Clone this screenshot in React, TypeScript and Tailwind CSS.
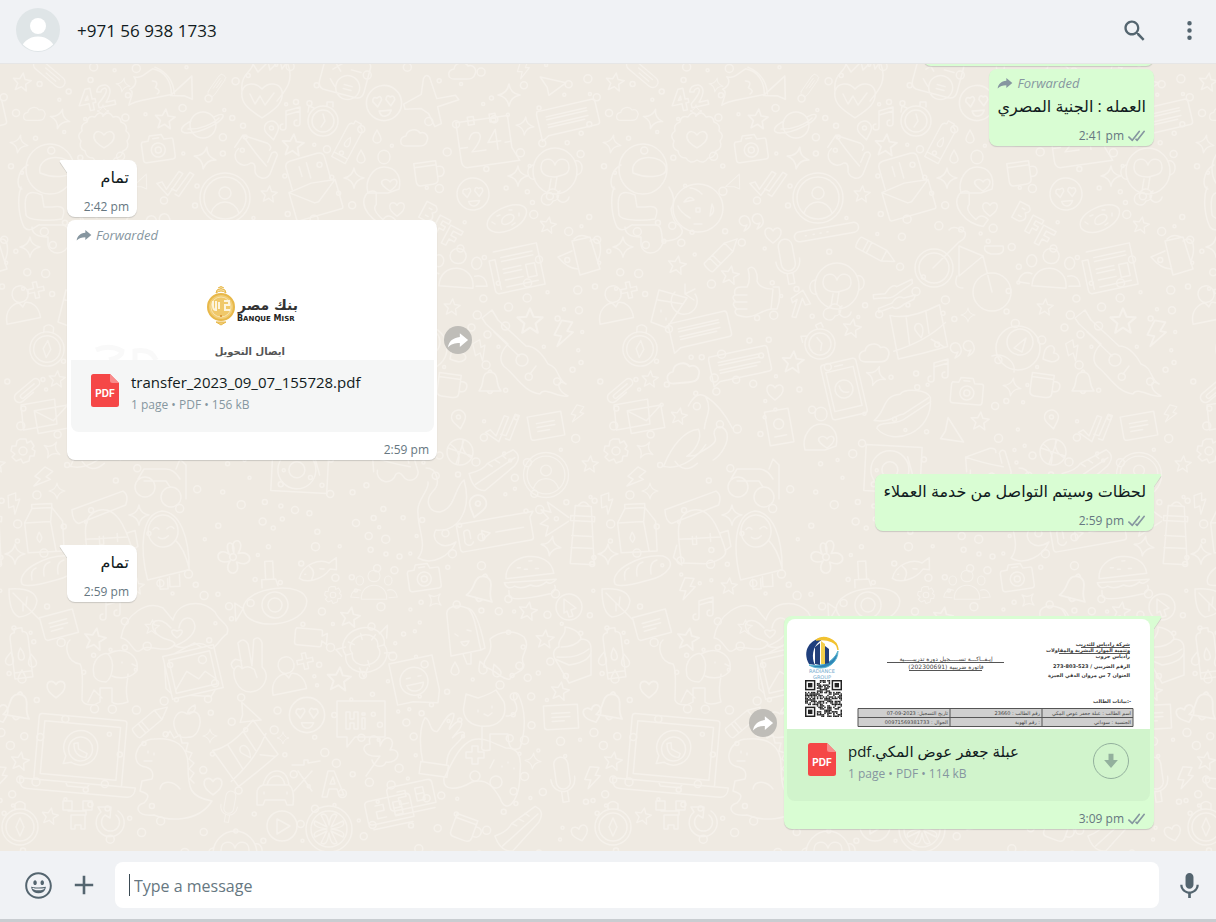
import type { ReactNode } from "react";

const SANS = "font-['Open_Sans','DejaVu_Sans',sans-serif]";

/* ---------- Wallpaper ---------- */

const SHAPES: Record<string, string> = {
  star: "M0-9 2.6-3 9-2.6 4 1.8 5.6 8.4 0 4.8-5.6 8.4-4 1.8-9-2.6-2.6-3Z",
  sparkle: "M0-10Q1-1.5 10 0Q1.5 1.5 0 10Q-1.5 1.5-10 0Q-1.5-1.5 0-10Z",
  heart: "M0 8C-5 4-9 1-8-4C-7-8-2-8 0-4C2-8 7-8 8-4C9 1 5 4 0 8Z",
  cloud: "M-9 8C-16 8-16-1-9-2C-8-9 2-10 5-5C11-7 14-1 12 3C11 8 7 8 3 8Z",
  pin: "M0 9C-4 3-7 1-7-3A7 7 0 0 1 7-3C7 1 4 3 0 9ZM2-3A2 2 0 1 1-2-3A2 2 0 1 1 2-3",
  drop: "M0-6C2-2 4 0 4 3A4 4 0 0 1-4 3C-4 0-2-2 0-6Z",
  bolt: "M-3-11 6-11 3-3 8-3-3 11-1 2-7 2Z",
  plane: "M-11-9 14-1-4 10-5 2Z",
  plus: "M-2-8H2V-2H8V2H2V8H-2V2H-8V-2H-2Z",
  camera: "M-15-8H-9L-7-13H5L7-8H14Q16-8 16-6V10Q16 13 13 13H-13Q-16 13-16 10V-6ZM7 2A7 7 0 1 1-7 2A7 7 0 1 1 7 2M3 2A3 3 0 1 1-3 2A3 3 0 1 1 3 2M-4-10H2",
  video: "M-15-8H9Q11-8 11-6V-2L16-5V6L11 3V7Q11 9 9 9H-13Q-16 9-16 6V-6Z",
  bell: "M-11 9C-6 3-8-2-6-6C-4-11 4-11 6-6C8-2 6 3 11 9ZM-3 9Q0 14 3 9M-2-10Q0-14 2-10",
  mug: "M-12-10H10V8Q10 13 4 13H-7Q-12 13-12 8ZM10-4Q18-5 17 2Q16 7 10 6M-12-6H10",
  checks: "M-18 2-13 0-8 7 3-12 7-10-6 13ZM-3 6 2 8 14-12 18-10 5 13 1 11",
  message: "M-17-12H17V12H-14Q-17 12-17 9ZM-9-4H9M-9 0H9M-9 4H3",
  ticket: "M-38-14H40L36-9V11Q36 14 33 14H-35Q-38 14-38 11ZM-24 6A4 4 0 0 1-32 2V-4A3 3 0 0 1-26-4V2M-14-4V5L-6 0ZM0 0H28",
  lines: "M-29-13H27Q30-13 30-10V10Q30 13 27 13H-23L-30 17V-10ZM-21-6H20M-21-3H20M-21 2H20M-21 5H16",
  envelope: "M-24 0 0-3 24 0V28Q24 30 22 30H-22Q-24 30-24 28ZM-24 0-2 17H2L24 0M-20-2V-24Q-20-30-14-30H14Q20-30 20-24V-2M-7-12-7-22M1-8V-24",
  letters: "M-22-13H12L10 12H-24ZM-10-5H24V18H-10ZM-10-5 7 8 24-5",
  face: "M16 0A16 16 0 1 1-16 0A16 16 0 1 1 16 0M-6 3-10-2Q-10-7-6-5Q-2-8-2-3ZM6 3 2-3Q3-8 6-5Q10-7 10-2ZM-5 7H6Q4 12 0 12Q-4 12-5 7Z",
  profile: "M25 0A25 25 0 1 1-25 0A25 25 0 1 1 25 0M21 0A21 21 0 1 1-21 0A21 21 0 1 1 21 0M6-5A6 6 0 1 1-6-5A6 6 0 1 1 6-5M-14 15Q-10 4 0 4Q10 4 14 15",
  person: "M8-14C8-3-8-3-8-14C-8-25 8-25 8-14ZM-17 14C-18-1-7-6-2-5L1-1 4-5C10-5 17 0 17 12Z",
  people: "M8-16C8-6-8-6-8-16C-8-26 8-26 8-16ZM-17 15C-18-10 18-10 17 15ZM-14-10A5 6 0 1 1-24-10A5 6 0 1 1-14-10M24-10A5 6 0 1 1 14-10A5 6 0 1 1 24-10M-18 3C-26 0-30 6-31 12L-20 13M18 3C26 0 30 6 31 12L20 13",
  watch: "M15 0A15 15 0 1 1-15 0A15 15 0 1 1 15 0M11 0A11 11 0 1 1-11 0A11 11 0 1 1 11 0M0-7 2 0-2 6M4-15V-19H10V-14M-9-13-14-15-15-9",
  compass: "M18 0A18 18 0 1 1-18 0A18 18 0 1 1 18 0M14 0A14 14 0 1 1-14 0A14 14 0 1 1 14 0M0-9 4 0 0 9-4 0ZM-5-17V-23Q0-28 5-23V-17",
  badge: "M0-24Q5-29 9-22Q16-24 17-17Q24-15 22-8Q28-4 23 2Q26 9 19 12Q18 19 11 19Q7 26 0 21Q-7 26-11 19Q-18 19-19 12Q-26 9-23 2Q-28-4-22-8Q-24-15-17-17Q-16-24-9-22Q-5-29 0-24ZM0 9C-6 5-11 2-10-4C-8-9-3-8 0-4C3-8 8-9 10-4C11 2 6 5 0 9Z",
  gear: "M-3-12H3L4-8 8-10 11-5 9-2 12 0 11 5 7 5 6 10 0 12-2 8-7 10-11 6-8 3-12 0-11-5-7-5-6-10ZM4 0A4 4 0 1 1-4 0A4 4 0 1 1 4 0",
  planet: "M13 0A13 13 0 1 1-13 0A13 13 0 1 1 13 0M-12-4C-24 2-24 8-16 8C0 8 22-5 20-10C18-12 13-9 11-8M-15 4C-4 5 10-1 16-7",
  rocket: "M-3-20C10-20 18-10 20 2L2 9C-6 12-16 15-20 20C-19 10-17 6-22 4C-16 0-16-6-20-9C-12-8-10-14-3-20ZM-1-22Q18-18 23 1M-1-8Q6-9 3-2 10 0 6 4",
  flameheart: "M0 22C-12 14-22 8-20-5C-17-14-6-14 0-7C6-14 17-14 20-5C22 8 12 14 0 22ZM-20-5C-22-22-10-24-9-32L-4-24 6-34 8-26 18-36 20-27 25-34C33-16 24-6 15 5M-12-2-7 8-2 0 3 9 12-3",
  pencil: "M-20-6H8L20 0 8 6H-20Q-22 6-22 0Q-22-6-20-6ZM8-6V6M-13-6V6M-9-6V6",
  capsule: "M-16-6H14A6 6 0 0 1 14 6H-16A6 6 0 0 1-16-6ZM-8-2H12M-4 2H10",
  clip: "M-12-4H10A4 4 0 0 1 10 4H-9A2 2 0 0 1-9 0H8M-12-4A4 4 0 0 0-12 6H2",
  airplane: "M-6-26Q-10-30-12-24V-8L-28 4-26 9-10 6-2 10 6 22 12 18 6 2 26-8 22-12 4-6Z",
  calendar: "M-26-24H26V8L32 22H-20Q-26 22-26 14ZM-14-28H-8V-20H-14ZM8-28H14V-20H8ZM-26 2H-18M20 2H26M-15-6Q-12-14-5-11Q0-6-14 7H0M12-12 3 0H16M12-12V8",
  monkey: "M22 0A22 23 0 1 1-22 0A22 23 0 1 1 22 0M-14-4C-14-14-2-14 0-6C2-14 14-14 14-4C14 4 8 4 0 6C-8 6-14 4-14-4ZM-22-6C-30-4-28 10-20 8M20-10C28-12 30 2 22 4M-8 22A6 6 0 1 0-2 30A6 6 0 1 0-8 22M5 20A6 6 0 1 0 14 26M-4 8-6 20M2 6 0 18",
  astronaut: "M24-20A24 25 0 1 1-24-20A24 25 0 1 1 24-20M-10-16C-14-36 22-36 23-20C24-12 4-10-10-16ZM-29-2C-34 12-30 30-26 38C-20 46-12 34-10 36H12C20 36 18 46 20 54C14 68 0 66-2 56V48C-14 48-18 44-18 38M-8 6C-26-2-26 10-24 26C-22 32 0 32 12 30C16 20 14 16 2 18H-6ZM-22-24C-34-18-34 0-28 0M26-2Q34 10 28 20M20 52C36 52 44 44 36 36Q30 34 28 20",
  cookie: "M25 0A25 24 0 1 1-25 0A25 24 0 1 1 25 0M-14-6Q-8-14-4-8ZM-8 10Q-18 4-20-2M14-4Q18 4 12 8ZM4-14Q-2-20-8-20M-2 4V0H2V4ZM-4 16H4",
  donut: "M-19 9C-26-6 12-22 19-10C24 4-8 22-19 9ZM-5 4C-7-3 6-8 7-2C7 3-3 8-5 4ZM-15 3 -12 5M-10-3-7-4M2-9 5-9M12-6 12-3M8 4 5 6",
  teapot: "M-10-16 8-20 18 12-2 18ZM-10-6-24 0Q-14 12-4 12M8-16C20-24 20-6 16 4M-8-18Q-2-24 6-20",
  news: "M-22-20H22V22H-24Q-28 22-28 18V-12H-22V18M-16-13H16M-16-9H16M-16-1H2M-16 3H2M-16 10H2M7-1H16V12H7ZM-16 17H16",
  drink: "M-10-14 18-6-2 24-18 18ZM-11-4 14 0M26-10A13 13 0 1 1 6-12M16-10 26-15M16-10 25-4M16-10V-20M-8 6V8M-3 14V16",
  thumb: "M-5-24C2-30 5-18 4-12C6-6 12-4 20-4L18 16C6 18 0 28-16 22Q-20 18-16 16Q-22 12-18 8Q-22 4-18 2Q-20-6-12-6H-6Q-2-12-5-24ZM20-6H26Q28 6 24 16H18M-18 2H-6M-18 9H-6M-16 16H-6",
  guitar: "M-40-36-30-44-24-34 4-8Q16-8 26 10C38 14 34 24 44 30C34 24 34 36 46 42C36 44 22 32 18 40C2 38-6 22-16 14C-24 8-22-2-14-10L-36-30ZM6 6A6 6 0 1 1-6 6A6 6 0 1 1 6 6M8 20 14 12M-3 2-28-22",
  mic: "M-7-16A7 7 0 0 1 7-16V2A7 7 0 0 1-7 2ZM-12-2C-12 16 12 16 12-2M-3 12V22H3V12",
  bike: "M-8 0A19 19 0 1 1-46 0A19 19 0 1 1-8 0M50 24A19 19 0 1 1 12 24A19 19 0 1 1 50 24M-28 0-2-26Q6-30 4-36Q-8-44-12-38M-2-22 22-12-2 8ZM22-12 31 24M24-22H42Q44-14 36-14H30Q22-16 24-22ZM-4 8Q-8 20 2 20M-12 0A15 15 0 1 1-42 0A15 15 0 1 1-12 0",
  wallet: "M-26-20Q-8-14 24-28L30 14Q4 20-20 24ZM-24 16Q8 8 29-10M-10-18-8 10M10-22 12 0M14 6 26 14M4 4C-2-4-4-6 0-10C6-12 8-4 4 4Z",
  rose: "M22 0A22 22 0 1 1-22 0A22 22 0 1 1 22 0M15-6A13 13 0 1 1-11-6A13 13 0 1 1 15-6M-26 8C-14 4-2 14-4 24M-4 0 8-10 4 4Z",
  lips: "M-30 12C-16 2-20-12-2-12C4-18 26-14 28-6C28 30-14 40-28 20C-26 12-8 20 2 12L28-2M-30 12C-14 16-8 8 0 8L26-6",
  tablet: "M-15-28H15Q18-28 18-25V25Q18 28 15 28H-15Q-18 28-18 25V-25Q-18-28-15-28ZM-14-20H14V20H-14ZM-4-24H4M9 0A9 9 0 1 1-9 0A9 9 0 1 1 9 0M-4-4Q-4 4 4 4",
  notes: "M-6 8V-8L8-12V4M-6 8A3 3 0 1 1-9 5M8 4A3 3 0 1 1 5 1M-6-4 8-8",
  ball: "M13 0A13 13 0 1 1-13 0A13 13 0 1 1 13 0M-12-4 12 4M4-12-4 12M-10-8Q2 0-2 12M3-12Q0 0 12 6",
  sneaker: "M-26-2Q-12-2-6-8L22-16Q30-8 20 0L-14 18Q-26 16-26-2ZM-22 10 22-8M-6-8-2-4M2-10 6-6M10-13 13-9",
  sub: "M-32 2C-30-20 32-24 32-2C30 24-30 26-32 2ZM13 0A13 13 0 1 1-13 0A13 13 0 1 1 13 0M7 0A7 7 0 1 1-7 0A7 7 0 1 1 7 0M-12-18V-26H2L4-19M-8-26V-44H0V-26M-32 2-40-4V14Z",
  dragon: "M-14-40C-2-40 0-24-6-18C-16-8-12 4 0 4C16 0 14-20 24-28C32 0 20 24-4 22C-10 30 0 44 16 34C10 48-8 58-22 50C-12 38-22 22-22 6C-24-8-10-18-12-26",
  lighthouse: "M-8-24H8L14 34H-10ZM-12-14H12V-9H-12ZM-5-24Q0-32 6-24M-10 6H10M-10 18H12M-14-12-36-26-32-16-42-18-34-10-42-4-34-2-36 8-14-8",
  burger: "M-24 0C-24-26 22-28 24-2ZM-26 4H26Q20 10 16 6Q8 12 0 8Q-10 12-16 8Q-24 12-26 4ZM-22 12V18Q-18 24 20 18Q26 14 24 10M-12-10H-9M0-16H3M6-8H9M-2-8H-5",
  cursor: "M13 0A13 13 0 1 1-13 0A13 13 0 1 1 13 0M-5-8 7 1 2 3 4 9 0 10-2 4-5 6Z",
  icecream: "M-16-20C-18-30-6-32 4-28C12-24 14 0 18 14L-12 20ZM4-28Q14-28 22 12L18 14M0 18 4 28H8V16M-8-2-5 0M4-6 8-5M-2 6Q2 14 6 5Z",
  blob: "M-20-14C-10-22 4-24 14-16C22-4 8 2 14 12C14 20 0 20 0 26C-8 28-14 16-26 14C-28 4-16 4-20-14Z",
  cupcake: "M-18 4C-22-4-16-8-14-8C-16-18-6-18-8-28C4-26 8-20 8-16C18-16 18-8 18-6Q20 6-4 10ZM-18 4-4 28 18 20V-4M-12-8Q2-8 8-16M-16 2Q4 4 16-6",
  sticker: "M-22-22H22V14L18 26-6 20H-22ZM13 0A14 14 0 1 1-15 0A14 14 0 1 1 13 0M-9 3H8Q6 10 0 10Q-8 10-9 3ZM-8-4H-4M4-4H7",
  cat: "M-26-14-24-26-12-22Q0-26 6-30L14-18C18-2 8 8-10 6C-24 4-28-6-26-14ZM-8 6V26Q-10 32 0 30V14H18Q18 34 30 28C36 10 36-10 28-26Q22-30 24-20C30-10 26-4 16-4M-12-10V-8M2-14V-12M-6-6-2-4 2-7",
  hand: "M-14 24C-20 8-22-10-18-20C-12-20-12-6-4-8C0-14 4-30 10-28C12-24 6-12 8-12C16-26 22-22 18-14L12-4C20-14 26-12 22-6C16 4 8 8 10 24ZM-16 24H12V36H-16Z",
  gamepad: "M-18-28C-6-32 4-24 16-20C28-20 32-12 30 4C30 34 16 48 10 30C4 20-2 10-18 14C-32 22-48 24-46 10C-38-4-32-22-18-28ZM-18-22H-12V-16H-6V-10H-12V-4H-18V-10H-24V-16H-18ZM-10 8A5 5 0 1 1-20 8A5 5 0 1 1-10 8M12 14A6 6 0 1 1 0 14A6 6 0 1 1 12 14M0 0 4-8M18-6V-5M12-2V-1M24 0V1",
  clock: "M-20-12H18Q22-12 22-8V12H-20Q-24 12-24 8V-8Q-24-12-20-12ZM-20 17H20M-14-6H-6V0H-14V7H-5M4-6H12V7H4ZM4 0H12",
  boat: "M-28 16C-18-4-4-18 10-18C14-8 4 4-4 8H4C16 2 28-2 26-8C22-18 34-24 38-12C40-2 30 10 22 14M-28 16C-10 22 8 8 16-2M-16 12Q-8 26 6 16M16-18C18-30 26-36 20-50C12-56 6-48 2-42M20-50Q34-40 44-16",
  passport: "M-12-16H12V18H-12ZM5-2A5 5 0 1 1-5-2A5 5 0 1 1 5-2M-6 10H6",
  carton: "M-18-8-10-22H10L20-8V22H-16ZM-10-22V-26H10V-22M-18-8H8L10-22M8-8 12 22M-4 2C-2 6 0 8-4 12C-8 8-6 6-4 2Z",
  backpack: "M-20 32C-22 8-26-16-8-20C10-24 18-4 24 20Q28 30 4 34ZM-22 8H20M-24 14-28 26-20 34M20 4 28 2 30 18 24 22M-34-22 18-38Q24-34 20-24L-28-8Q-34-10-34-22ZM-8 6V14H-4V6M10 4V12",
  binoculars: "M-5 8A10 10 0 1 1-25 8A10 10 0 1 1-5 8M21 18A10 10 0 1 1 1 18A10 10 0 1 1 21 18M-22 0-16-10H6Q14-10 20 0M-16 2H6L10 8M16-10 20-20 26-14V20",
  girl: "M-18 30C-24 0-22-36 0-38C18-36 26-10 24 22ZM15-18A14 15 0 1 1-15-18A14 15 0 1 1 15-18M-5-12Q0-8 5-13M-10-20Q-7-24-4-20M4-20Q8-24 11-20M-6 30V40H2V30M4 28V38H14V26M12-8Q20 0 24 20",
  bread: "M-26 14C-32 0 0-16 22-14C38-8 26 6 8 10C-6 14-22 18-26 14ZM-16 10Q-18 0-12-2M-4 6Q-6-6 2-8M10 4Q8-8 16-10",
  leaf: "M-14-14Q12-16 14-2Q12 12-4 14Q-14 10-14-14ZM-10-10 16 16M0 0V8M4-6 3 2",
  bottle: "M-9-16Q-9-22-4-22V-26H4V-22Q9-22 9-16V24H-9ZM0-6C4 0 4 6 0 6C-4 6-4 0 0-6ZM-9 18H9",
  flower: "M0-4C-8-18 10-20 4-4C18-10 20 8 4 4C12 18-8 18-2 4C-16 12-18-8-4-2C-12-14 0-16 0-4M3 0A3 3 0 1 1-3 0A3 3 0 1 1 3 0",
  fish: "M-20 6C-14-8 4-10 12-4L20-8 18 4 12 2C2 12-14 12-20 6ZM-8-4Q-2 2-8 9M-14 3H-13M2 0 6 1",
  hands: "M-4 4C-16-10-28-2-20 8C-12 18-2 14 0 20C-8 32-28 18-34 26C-42 32-44 14-54 14C-50-10-28-24-12-16L-2-4C2-22 26-26 40-12C44-2 56 0 52 10C44 14 40 30 32 22C20 14 14 28 0 22C14 16 20 10 20 2C18-10 6-8 4 4M2 14C-6 8-4 4 2 7C8 4 10 8 2 14Z",
  turtle: "M20 0A21 17 0 1 1-20 0A21 17 0 1 1 20 0M13 0A14 11 0 1 1-13 0A14 11 0 1 1 13 0M13 0H20M-13 0H-20M0-11V-17M0 11V17M9-8 14-12M-9-8-14-12M18-12 28-18 24-6M-10 16-8 26-2 18M-18-8-28-8-24 0M18 8 28 10",
  dog: "M-38-38C-44-34-42-16-28-14C-24-8-26 10-26 22C-24 28-14 28-8 24V10H4V24Q8 28 20 24C16 10 20 4 20-4M-14-2C-18-20-4-26 0-24C8-16 4 0-2 4C-8 4-12 2-14-2ZM0-24C18-34 34-20 28-6C20 2 8 0 4-2M14-16V-15M24-14 28-12M-20 24 -14 12-6 20",
  photo: "M-26-22H26V22H-26ZM-21-17H21V17H-21ZM-21 14-6-2 4 8 12 2 21 12M16-10A4 4 0 1 1 8-10A4 4 0 1 1 16-10M-26-14-30 10-26 16M-14-22 8-28 14-22M-8 22 12 28 18 22",
  peace: "M-8 2-10-24Q-4-30 0-22L2 0 6-26Q12-30 14-22L12 2C20 12 12 26-2 26C-16 24-18 8-16 2Q-12-4-8 2Q-2-2 4 4L6 12M-16 2Q-22-4-14-8L-8-6",
  apple: "M0-9C-8-16-16-4-12 6C-8 18 0 14 2 14C12 16 18-8 8-11Q4-12 0-9ZM0-9Q2-16 8-18 10-12 2-9",
  hi: "M-24-20H24V16H-6L-14 26V16H-24ZM-15-9H-11V-2H-7V-9H-3V8H-7V2H-11V8H-15ZM1-3H4V8H1ZM1-8H4V-6H1Z",
  laptop: "M-41-38H41Q44-38 44-35V28H-44V-35Q-44-38-41-38ZM-38-31H38V22H-38ZM-58 28H58Q58 38 50 38H-50Q-58 38-58 28ZM-12 28-10 32H10L12 28M17-6A17 17 0 0 1-8 8L-16 10-14 2A17 17 0 1 1 17-6ZM12-6A12 12 0 1 1-12-6A12 12 0 1 1 12-6M-7-11Q-6 2 6 2L7-2 2-4-2-6-3-12Z",
  dino: "M-20-8C-38-10-30-36-12-36C8-38 22-30 22-10C22 14 24 22 46 26C32 48 2 46-12 40C-30 42-32 30-22 28C-14 20-20 18-26 16L-24 6-14 4C-12-2-14-6-20-8ZM-18-24V-22M-12-22V-20M-22-14H-14M-6 14C-4 4 8 6 14 14M0-38 4-44 8-37 14-40 16-32 22-32 20-24 26-22 23-16 28-12 23-6 28-2 24 4 28 8",
  car: "M-18 14V2Q-18-4-12-6Q-8-20 2-20Q12-20 14-6Q20-2 18 14H12L10 9H-10L-12 14ZM-12-6H14M-8-6Q-6-15 2-15Q8-15 10-6M-11 1V3M12 1V3",
  alpha: "M-28-12H-16V-17H-12V-14L0-16M-22-6-8 14M-8-6-26 14M2 20 8-6H14L24 18H19L17 12H9L7 20ZM10 7H15L13 0Z",
  clover: "M0 0C-18 2-20-12-10-12C-14-24 2-22 0-10C4-24 18-18 10-6C22-8 20 8 6 6C4 12-6 12-8 4M0 0-14 20",
  robot: "M-14-16H-5V-7H-14ZM6-16H15V-7H6ZM-9-6H9V-2H-6V12H-2V8H4V12H8V-2",
  refresh: "M8-11A14 14 0 1 1-9-10L-12-15H1L0-4-5-7A9 9 0 1 0 6-7",
  play: "M15 0A15 15 0 1 1-15 0A15 15 0 1 1 15 0M-5-7 8 0-5 8Z",
  orange: "M23 0A23 23 0 1 1-23 0A23 23 0 1 1 23 0M18 0A18 18 0 1 1-18 0A18 18 0 1 1 18 0M2-2 8-14Q2-18 0-4-2-18-8-14L-2-2-14-8Q-18-2-2 0-18 2-14 8L-2 2-8 14Q-2 18 0 4 2 18 8 14L2 2 14 8Q18 2 2 0 18-2 14-8Z",
  bff: "M-22-14H-12Q-6-10-12-6Q-6 0-14 4H-22ZM-17-9H-14M-17-1H-14M-4-8H8V-4H1V0H6V4H1V10H-4ZM10-4H24V0H15V5H21V9H15V16H10Z",
  n42: "M-10-11-19 4H-9V11H-5V4H-2V0H-5V-11ZM-9-4V0H-12ZM1-6Q3-13 11-11Q19-6 8 6H17V10H0V6Q14-5 10-8Q6-8 5-5Z",
  calc: "M-22-22H18Q24-22 24-16V8Q24 16 16 16H-14Q-22 16-22 8ZM-12-14-4-6M-4-14-12-6M6-10H16M-12 4-6 10M19 8A12 12 0 1 1-5 8A12 12 0 1 1 19 8M3 6H11M3 10H11",
  shades: "M-18-2A9 9 0 1 0-2 8Q2 6 4 12A8 8 0 1 0 20 10L21-8Q18-12 15-8L14 2M-22-2-18-16H8Q14-14 12-10M-18-16Q-6-6 14 6",
  phone: "M-10-22Q-4-26 0-22L-2-10Q-8-6 2 6Q8 0 14 8L8 14C-10 8-20-12-10-22Z",
  head: "M-16 12C-20-2-10-14 0-14C12-14 18-4 15 8L4 12ZM6 10C0 6-4 3-2 0C1-3 5-1 6 1C8-2 12-3 13 1C13 4 9 8 6 10ZM6-24C6-15-6-15-6-24C-6-33 6-33 6-24Z",
  quotes: "M-4-6A5 5 0 1 0-6 0L-9 6Q0 2-4-6ZM9-8A5 5 0 1 0 7-2L4 4Q13 0 9-8Z",
  turntable: "M-28-22H28V24H-28ZM16 2A19 19 0 1 1-22 2A19 19 0 1 1 16 2M5 2A8 8 0 1 1-11 2A8 8 0 1 1 5 2M14-12 20 6",
  tools: "M-20 2H-8Q0-8 4-4L20-10V-6L6 2Q-2 8-8 6H-20ZM-16 16-2 12Q4 4 10 8L22 6 20 10 10 14Q2 20-2 16L-16 20Z",
  arrow: "M-10-6 0-16 10-4 5-2 1-8-2 12H-6L-4-6-8-2Z",
  rollpin: "M-28-5H27A5 5 0 0 1 27 5H-28A5 5 0 0 1-28-5ZM-22 0H-21M-14 0H-13M-7 0H-6M0 0H1",
};

// [shape, x, y, rotation, scale]
type Doodle = [string, number, number, number?, number?];

const DOODLES: Doodle[] = [
  ["star", 22, 18, 8], ["capsule", 50, 10, 40, 0.9], ["n42", 97, 34, -12], ["sparkle", 123, 21, 10, 0.7],
  ["rocket", 152, 25, 10], ["plane", 185, 26, -60, 1.1], ["capsule", 217, 21, -55, 0.6], ["flameheart", 262, 32],
  ["cloud", 35, 50, 0, 0.8], ["sparkle", 60, 55, 15], ["badge", 104, 75], ["star", 165, 55, 5, 1.1],
  ["planet", 203, 61], ["pin", 272, 67, -10], ["camera", 158, 84, -8], ["sparkle", 19, 80, 10, 0.9],
  ["notes", 292, 55], ["star", 293, 81, 5, 1.2], ["calc", 343, 14, 15], ["face", 384, 39, -5, 1.1],
  ["watch", 323, 57], ["bottle", 348, 78, 28, 0.85], ["cloud", 415, 74], ["shades", 255, 92, 18],
  ["sparkle", 205, 94, 10, 1.1], ["envelope", 312, 122, -16], ["sparkle", 354, 114], ["profile", 225, 134],
  ["star", 269, 130, 5, 0.9], ["drop", 377, 72], ["drop", 361, 92], ["head", 384, 117],
  ["phone", 380, 150, -10], ["heart", 397, 145, 0, 0.9], ["airplane", 432, 40, 8], ["cloud", 463, 7],
  ["bolt", 523, 6, 0, 0.8], ["plane", 552, 21, -5], ["sparkle", 509, 31, 0, 1.1], ["calendar", 485, 79, -8],
  ["lines", 568, 54, -13], ["sparkle", 525, 62, 5, 0.9], ["mug", 427, 108, -8], ["sparkle", 518, 112],
  ["face", 473, 130, -5], ["monkey", 555, 107], ["bff", 440, 160, 28], ["donut", 507, 155],
  ["star", 548, 161, 10, 0.9], ["astronaut", 50, 125], ["cookie", 105, 144], ["plane", 142, 119, -60, 0.7],
  ["sparkle", 103, 47, 0, 0.6], ["checks", 175, 119, 5], ["heart", 180, 171, 0, 1], ["pencil", 130, 189, -45],
  ["quotes", 160, 161], ["teapot", 582, 193], ["news", 519, 203, -12], ["sparkle", 30, 183],
  ["star", 84, 201, 10], ["star", 137, 211, 10], ["person", 22, 244, -8], ["plus", 36, 226, -12],
  ["drink", 76, 240], ["thumb", 160, 229], ["people", 457, 208, 4], ["star", 452, 243, 5, 0.9],
  ["star", 530, 257, 0, 1.4], ["guitar", 522, 290], ["bolt", 563, 270, 10, 1.2], ["compass", 47, 285, 5, 0.95],
  ["lines", 107, 266, -13], ["mic", 195, 198, -10], ["monkey", 244, 222], ["pencil", 284, 188, 28],
  ["rollpin", 234, 168, -10], ["bike", 368, 204], ["tools", 300, 227, -5], ["arrow", 207, 242, 10],
  ["wallet", 324, 270, -3], ["star", 259, 264, 10], ["watch", 227, 280, -25], ["cloud", 282, 289, 0, 1.1],
  ["star", 200, 298, 5, 1.2], ["sparkle", 375, 251, 0, 0.7], ["rose", 425, 284], ["mug", 450, 320, 8],
  ["quotes", 371, 288], ["heart", 457, 291, 60], ["bolt", 480, 287, -30, 0.9], ["bell", 490, 318],
  ["camera", 374, 327, 5], ["sparkle", 419, 323, 10, 0.9], ["lips", 310, 342, -5], ["tablet", 251, 325, -13],
  ["sparkle", 283, 312, 20], ["notes", 347, 307], ["head", 228, 374], ["plane", 358, 369, 40, 1.1],
  ["star", 387, 357, 5], ["pin", 459, 356, -10], ["checks", 503, 364, -8], ["message", 546, 362, -10],
  ["bolt", 577, 350, 15, 0.8], ["ball", 460, 388], ["sneaker", 495, 406, -12], ["turntable", 300, 404, 3],
  ["profile", 546, 411, 0, 0.9], ["shades", 395, 402, -20], ["dragon", 440, 444], ["pin", 477, 443, 15, 1.2],
  ["ticket", 496, 468, -10], ["lighthouse", 582, 466, 3], ["sparkle", 551, 482, 10], ["camera", 424, 513, -8],
  ["bell", 482, 524, 15, 1.2], ["burger", 530, 513, -4], ["cursor", 569, 543], ["star", 528, 547, 10],
  ["sparkle", 435, 536, 40, 0.8], ["icecream", 463, 572], ["blob", 510, 589], ["cupcake", 573, 591],
  ["star", 545, 575, 5], ["sticker", 415, 617, -12], ["cat", 490, 656], ["star", 560, 627, 10],
  ["message", 561, 653, -3], ["heart", 593, 650, -20, 1.1], ["hand", 440, 676, 8], ["gamepad", 490, 704],
  ["mic", 563, 716, -8], ["sparkle", 533, 697, 5, 0.8], ["bolt", 592, 714, 5], ["clock", 412, 731, -12],
  ["mug", 465, 763, 20], ["heart", 580, 769, -15], ["sneaker", 520, 765, -20], ["drop", 455, 604],
  ["drop", 482, 603, -20], ["drop", 496, 606, -20], ["clip", 28, 325, -40], ["star", 57, 315, 5, 0.9],
  ["cloud", 91, 309, -5, 1.2], ["lines", 147, 300, -12], ["heart", 182, 328], ["letters", 45, 350, -10],
  ["star", 86, 352, 10, 0.9], ["gear", 23, 387], ["boat", 97, 384, -5], ["passport", 186, 362, -10],
  ["sparkle", 52, 386, 30, 0.9], ["bolt", 42, 414, 30], ["star", -3, 400, 5, 0.9], ["sparkle", 57, 427, 0, 0.8],
  ["bolt", 14, 440, -20, 0.9], ["carton", 43, 466, -3], ["backpack", 107, 466, -3], ["binoculars", 160, 415],
  ["sparkle", 139, 451], ["girl", 164, 485, -3], ["sparkle", 15, 490], ["bread", 48, 506],
  ["bolt", 94, 525, 5], ["star", 136, 522, 5, 0.9], ["leaf", 23, 539], ["message", 59, 561, -15],
  ["notes", 112, 545], ["star", 95, 575, 10, 1.2], ["bottle", 21, 590, -7], ["flower", 233, 493, 10, 1.1],
  ["fish", 318, 505, -10], ["people", 374, 524, 0, 0.75], ["sub", 275, 541, -3], ["gear", 333, 531, 0, 0.7],
  ["star", 350, 553, 10, 1.1], ["hands", 175, 560], ["video", 311, 573, 5], ["turtle", 365, 586, -15],
  ["star", 152, 563, 5, 0.8], ["dog", 108, 614], ["photo", 193, 608, -13], ["peace", 250, 602, -5],
  ["person", 288, 615, -8], ["plus", 305, 597, -12], ["star", 339, 615, 5, 1.3], ["heart", 56, 625, 0, 1.1],
  ["drop", 10, 594, 10], ["drop", 32, 596, -10], ["drop", 22, 612], ["apple", 187, 659],
  ["pencil", 152, 656, -40], ["plane", 248, 651, 25], ["face", 307, 651, 0, 1.1], ["hi", 361, 657],
  ["bell", 18, 642, 10, 1.2], ["laptop", 80, 691, 5], ["dino", 166, 711], ["wallet", 245, 692, -28],
  ["car", 275, 727], ["alpha", 320, 713], ["clover", 380, 692], ["mic", 229, 743, 10, 0.7],
  ["heart", 213, 722, 0, 1.1], ["sparkle", 210, 672, 0, 0.7], ["sparkle", 283, 674, 0, 0.6], ["star", 20, 697, 10],
  ["compass", 20, 763], ["star", 50, 752, 10, 0.9], ["robot", 77, 753], ["refresh", 110, 758],
  ["play", 282, 762], ["orange", 329, 765], ["clock", 390, 745, -12], ["monkey", 235, 790],
];

// Small rings fill the gaps that the doodles leave.
function scatterRings() {
  const rings: [number, number, number][] = [];
  let seed = 7;
  const next = () => (seed = (seed * 16807) % 2147483647) / 2147483647;
  for (let i = 0; i < 9000 && rings.length < 520; i++) {
    const x = next() * 593;
    const y = next() * 800;
    const r = [1.5, 2, 2.5, 3.5, 4][Math.floor(next() * 5)];
    const clear = DOODLES.every(([shape, dx, dy, , s = 1]) => {
      const room = (SHAPES[shape].length > 230 ? 29 : SHAPES[shape].length > 110 ? 19 : 11) * s;
      return Math.hypot(dx - x, dy - y) > room + r;
    });
    if (clear && rings.every(([a, b, c]) => Math.hypot(a - x, b - y) > c + r + 6)) {
      rings.push([x, y, r]);
    }
  }
  return rings;
}

const RINGS = scatterRings();

function Wallpaper() {
  return (
    <svg aria-hidden="true" className="absolute inset-0 h-full w-full">
      <defs>
        <g id="doodles" fill="none" stroke="#f5f1eb" strokeWidth="1.5" strokeLinejoin="round" strokeLinecap="round">
          {DOODLES.map(([shape, x, y, rotate = 0, scale = 1], i) => (
            <path key={i} d={SHAPES[shape]} transform={`translate(${x} ${y}) rotate(${rotate}) scale(${scale})`} />
          ))}
          {RINGS.map(([x, y, r], i) => (
            <circle key={i} cx={x} cy={y} r={r} />
          ))}
        </g>
      </defs>
      {[-593, 0, 593, 1186, 1779].map((x) => (
        <use key={x} href="#doodles" x={x} />
      ))}
    </svg>
  );
}

/* ---------- Icons ---------- */

function Icon({ d, className }: { d: string; className: string }) {
  return (
    <svg viewBox="0 0 24 24" className={className} fill="currentColor" aria-hidden="true">
      <path d={d} />
    </svg>
  );
}

const SEARCH =
  "M15.9,14.3H15L14.7,14c1-1.1,1.6-2.7,1.6-4.3c0-3.7-3-6.7-6.7-6.7S3,6,3,9.7s3,6.7,6.7,6.7c1.6,0,3.2-0.6,4.3-1.6l0.3,0.3v0.8l5.1,5.1l1.5-1.5L15.9,14.3z M9.7,14.3c-2.6,0-4.6-2.1-4.6-4.6s2.1-4.6,4.6-4.6s4.6,2.1,4.6,4.6S12.3,14.3,9.7,14.3z";
const DOTS =
  "M12 7.500a2 2 0 1 0 0-4 2 2 0 0 0 0 4zm0 2.500a2 2 0 1 0 0 4 2 2 0 0 0 0-4zm0 6.500a2 2 0 1 0 0 4 2 2 0 0 0 0-4z";
const SMILEY =
  "M9.153,11.603c0.795,0,1.439-0.879,1.439-1.962S9.948,7.679,9.153,7.679S7.714,8.558,7.714,9.641S8.358,11.603,9.153,11.603z M5.949,12.965c-0.026-0.307-0.131,5.218,6.063,5.551c6.066-0.25,6.066-5.551,6.066-5.551C12,14.381,5.949,12.965,5.949,12.965z M17.312,14.073c0,0-0.669,1.959-5.051,1.959c-3.505,0-5.388-1.164-5.607-1.959C6.654,14.073,12.566,15.128,17.312,14.073z M11.804,1.011c-6.195,0-10.826,5.022-10.826,11.217s4.826,10.761,11.021,10.761S23.02,18.423,23.02,12.228C23.021,6.033,17.999,1.011,11.804,1.011z M12,21.354c-5.273,0-9.381-3.886-9.381-9.159s3.942-9.548,9.215-9.548s9.548,4.275,9.548,9.548C21.381,17.467,17.273,21.354,12,21.354z M15.108,11.603c0.795,0,1.439-0.879,1.439-1.962s-0.644-1.962-1.439-1.962s-1.439,0.879-1.439,1.962S14.313,11.603,15.108,11.603z";
const PLUS = "M10.8 3.500h2.400v7.300h7.300v2.400h-7.300v7.300h-2.400v-7.300H3.500v-2.400h7.300z";
const MIC =
  "M11.999,14.942c2.001,0,3.531-1.53,3.531-3.531V4.35c0-2.001-1.53-3.531-3.531-3.531S8.469,2.35,8.469,4.35v7.061C8.469,13.412,9.999,14.942,11.999,14.942z M18.237,11.412c0,3.531-2.942,6.002-6.237,6.002s-6.237-2.471-6.237-6.002H3.761c0,4.001,3.178,7.297,7.061,7.885v3.884h2.354v-3.884c3.884-0.588,7.061-3.884,7.061-7.885H18.237z";
const FORWARD = "M14 4.500 23 12 14 19.500V15.300C8.500 15.300 4.500 16.400 1 20.200C2 14 6 9.600 14 8.800z";
const DOWNLOAD = "M9.300 4h5.400v7h4.800L12 19.500 4.500 11h4.800z";

function DoubleCheck() {
  return (
    <svg viewBox="0 0 16 15" className="h-[18px] w-[19px] text-[#8696a0]" fill="currentColor" role="img" aria-label="Delivered">
      <path d="M15.01 3.316l-.478-.372a.365.365 0 0 0-.51.063L8.666 9.879a.32.32 0 0 1-.484.033l-.358-.325a.319.319 0 0 0-.484.032l-.378.483a.418.418 0 0 0 .036.541l1.32 1.266c.143.14.361.125.484-.033l6.272-8.048a.366.366 0 0 0-.064-.512zm-4.1 0l-.478-.372a.365.365 0 0 0-.51.063L4.566 9.879a.32.32 0 0 1-.484.033L1.891 7.769a.366.366 0 0 0-.515.006l-.423.433a.364.364 0 0 0 .006.514l3.258 3.185c.143.14.361.125.484-.033l6.272-8.048a.365.365 0 0 0-.063-.51z" />
    </svg>
  );
}

function Avatar() {
  return (
    <svg viewBox="0 0 44 44" className="size-11 shrink-0" aria-hidden="true">
      <clipPath id="avatar-clip">
        <circle cx="22" cy="22" r="21" />
      </clipPath>
      <circle cx="22" cy="22" r="22" fill="#dfe5e7" />
      <g clipPath="url(#avatar-clip)" fill="#fff">
        <circle cx="22" cy="18" r="8" />
        <ellipse cx="22" cy="43" rx="17" ry="14.500" />
      </g>
    </svg>
  );
}

function PdfIcon() {
  return (
    <svg viewBox="0 0 28 33" className="h-[33px] w-7 shrink-0" role="img" aria-label="PDF">
      <path d="M2.500 0H19l9 9v21.500a2.500 2.500 0 0 1-2.500 2.500h-23A2.500 2.500 0 0 1 0 30.500v-28A2.500 2.500 0 0 1 2.500 0z" fill="#f54747" />
      <path d="M19 0l9 9h-6.500A2.500 2.500 0 0 1 19 6.500z" fill="#f98b8b" />
      <text x="14" y="23" textAnchor="middle" fontSize="10" fontWeight="700" fill="#fff" fontFamily="Inter, sans-serif">
        PDF
      </text>
    </svg>
  );
}

/* ---------- Document previews ---------- */

function ReceiptPreview() {
  return (
    <svg viewBox="0 0 363 109" className="block h-auto w-full bg-white" fontFamily="'DejaVu Sans', sans-serif" aria-hidden="true">
      <g fill="none" stroke="#f9f9f9" strokeWidth="5">
        <path d="M25 99Q38 93 51 100Q51 106 38 109M64 109V100Q80 97 85 109" />
      </g>
      <g stroke="#e8b84a">
        <circle cx="150" cy="56" r="13" fill="#f1cd75" strokeWidth="2" />
        <circle cx="150" cy="56" r="10" fill="#f0c869" stroke="#f8e3ad" />
        <path d="M145 42q5-4 10 0l-1-3q-4-3-8 0zM147 37q3-3 6 0" fill="#f6dea0" strokeWidth="1" />
        <path d="M142 50v5q0 4 3 4v-9M148 51v7M153 50h5v4h-4v5h5" fill="none" stroke="#fdf4dc" strokeWidth="2" />
        <path d="M145 71h10l-5 3z" fill="#f1cd75" />
        <circle cx="150" cy="65" r="1" fill="#d48a2a" stroke="none" />
      </g>
      <text x="227" y="59" textAnchor="end" fontSize="14" fontWeight="700" fill="#333">بنك مصر</text>
      <text x="166" y="70" fontSize="8" fontWeight="700" fill="#222">
        B<tspan fontSize="7">ANQUE</tspan> M<tspan fontSize="7">ISR</tspan>
      </text>
      <text x="214" y="104" textAnchor="end" fontSize="10" fontWeight="700" fill="#555">ايصال التحويل</text>
    </svg>
  );
}

const FINDERS = [[0, 0], [18, 0], [0, 18]];

function QrCode() {
  const cells: ReactNode[] = [];
  for (let y = 0; y < 25; y++) {
    for (let x = 0; x < 25; x++) {
      const inFinder = FINDERS.some(([fx, fy]) => x >= fx - 1 && x <= fx + 7 && y >= fy - 1 && y <= fy + 7);
      if (!inFinder && (x * x * 7 + y * 13 + x * y * 5 + ((x * 31 + y * y * 17) % 11)) % 7 < 4) {
        cells.push(<rect key={`${x}-${y}`} x={x} y={y} width="1" height="1" />);
      }
    }
  }
  return (
    <g transform="translate(18 61) scale(1.48)" fill="#222">
      {cells}
      {FINDERS.map(([x, y]) => (
        <g key={`${x}-${y}`}>
          <rect x={x + 0.5} y={y + 0.5} width="6" height="6" fill="none" stroke="#222" />
          <rect x={x + 2} y={y + 2} width="3" height="3" />
        </g>
      ))}
    </g>
  );
}

function InvoicePreview() {
  return (
    <svg viewBox="0 0 363 110" className="block h-auto w-full bg-white" fontFamily="'DejaVu Sans', sans-serif" aria-hidden="true">
      <path d="M22 45C15 32 22 20 38 18L32 23C26 28 24 38 28 46Z" fill="#1f3f7d" />
      <path d="M29 21C36 16 50 19 51 31C51 24 42 19 29 21Z" fill="#f2c230" stroke="#f2c230" strokeWidth="1.500" />
      <path d="M51 32C51 42 43 49 34 49C29 49 25 48 22 46C34 48 46 44 51 32Z" fill="#2f86b8" stroke="#58b4cf" />
      <path d="M28 45V28l5-4v22zM38 45V27l4 3v14z" fill="#23407a" />
      <path d="M34 45V22l4 3v20z" fill="#f3cf4c" />
      <g fill="#6fa9cc" fontSize="5" textAnchor="middle">
        <text x="35" y="54">RADIANCE</text>
        <text x="35" y="60">GROUP</text>
      </g>
      <QrCode />
      <g fill="#444" fontSize="6" textAnchor="middle">
        <text x="159" y="42">إيـفــاكـــة تســـــجيل دورة تدريبـــــية</text>
        <text x="159" y="50">فاتورة ضريبية (202300691)</text>
      </g>
      <path d="M100 43.500H217M122 51.500H195" stroke="#555" />
      <g fill="#333" fontSize="5" fontWeight="700" textAnchor="end">
        <text x="343" y="27">شركة رادياس للتدريب</text>
        <text x="343" y="33">وتنمية الموارد البشرية والمقاولات</text>
        <text x="343" y="39">رادياس جروب</text>
        <text x="343" y="49">الرقم الضريبي / 523-803-273</text>
        <text x="343" y="58">العنوان 7 س مروان الدقي الجيزة</text>
        <text x="344" y="84">بيانات الطالب:-</text>
      </g>
      <path d="M294 28.500H343M272 34.500H343" stroke="#555" />
      <path d="M71 89.500H346V107.500H71ZM71 98.500H346M163 89.500V107.500M255 89.500V107.500" fill="#cfcfcf" stroke="#555" />
      <g fill="#444" fontSize="5" textAnchor="end">
        <text x="344" y="96">اسم الطالب : عبلة جعفر عوض المكي</text>
        <text x="253" y="96">رقم الطالب : 23660</text>
        <text x="161" y="96">تاريخ التسجيل: 2023-09-07</text>
        <text x="344" y="105">الجنسية : سوداني</text>
        <text x="253" y="105">رقم الهوية :</text>
        <text x="161" y="105">الجوال : 00971569381733</text>
      </g>
    </svg>
  );
}

/* ---------- Messages ---------- */

interface BubbleProps {
  out?: boolean;
  tail?: boolean;
  className?: string;
  children?: ReactNode;
}

function Bubble({ out = false, tail = false, className = "", children }: BubbleProps) {
  const corner = !tail ? "" : out ? "rounded-tr-none" : "rounded-tl-none";
  return (
    <div
      className={`relative rounded-lg text-[#111b21] shadow-[0_1px_1px_rgba(11,20,26,0.16)] ${out ? "bg-[#d9fdd3]" : "bg-white"} ${corner} ${className}`}
    >
      {tail && (
        <svg
          viewBox="0 0 8 13"
          className={`absolute top-0 h-[13px] w-2 ${out ? "left-full -scale-x-100 text-[#d9fdd3]" : "right-full text-white"}`}
          fill="currentColor"
          aria-hidden="true"
        >
          <path d="M8 1.500V13.500L1 3.500Q0 1.500 2 1H8z" fill="#0b141a" opacity="0.13" />
          <path d="M8 0H2C.8 0 .3 1 1 2l7 10.500z" />
        </svg>
      )}
      {children}
    </div>
  );
}

function Forwarded({ className }: { className: string }) {
  return (
    <div className={`flex items-center gap-1 text-[13px] leading-4 text-[#8696a0] italic ${className}`}>
      <Icon d={FORWARD} className="size-4" />
      Forwarded
    </div>
  );
}

function Stamp({ time, out = false }: { time: string; out?: boolean }) {
  return (
    <div className="flex h-[15px] items-center justify-end gap-[3px] text-[12px] leading-[15px] whitespace-nowrap text-[#667781]">
      <time>{time}</time>
      {out && <DoubleCheck />}
    </div>
  );
}

interface TextMessageProps {
  text: string;
  time: string;
  out?: boolean;
  tail?: boolean;
  forwarded?: boolean;
}

function TextMessage({ text, time, out, tail, forwarded }: TextMessageProps) {
  return (
    <Bubble out={out} tail={tail} className={`min-w-[70px] px-2 pt-1.5 pb-[3px] ${out ? "self-end" : "self-start"}`}>
      {forwarded && <Forwarded className="mb-1" />}
      <p dir="rtl" lang="ar" className="mb-[11px] text-[16px] leading-[22px]">
        {text}
      </p>
      <Stamp time={time} out={out} />
    </Bubble>
  );
}

function ForwardButton() {
  return (
    <button type="button" aria-label="Forward" className="flex size-7 items-center justify-center rounded-full bg-[#bfbdb8] text-white">
      <Icon d={FORWARD} className="size-[22px]" />
    </button>
  );
}

interface DocumentRowProps {
  name: string;
  details: string;
  out?: boolean;
}

function DocumentRow({ name, details, out }: DocumentRowProps) {
  return (
    <div className={`flex h-[72px] items-start rounded-b-lg pt-[14px] ${out ? "bg-[#d1f4cc] px-[21px]" : "bg-[#f5f6f6] px-5"}`}>
      <PdfIcon />
      <div className="ml-3 flex-1">
        <p dir="auto" className="text-left text-[15px] leading-4">
          {name}
        </p>
        <p className="mt-1.5 text-[12px] leading-[18px] text-[#8696a0]">{details}</p>
      </div>
      {out && (
        <button
          type="button"
          aria-label="Download"
          className="flex size-9 items-center justify-center rounded-full border border-[#93b09d] text-[#93b09d]"
        >
          <Icon d={DOWNLOAD} className="size-[22px]" />
        </button>
      )}
    </div>
  );
}

export default function App() {
  return (
    <div className={`flex h-screen flex-col bg-[#f0f2f5] ${SANS}`}>
      <header className="flex h-[63px] shrink-0 items-center px-4 pb-[3px]">
        <Avatar />
        <h1 className="ml-[17px] flex-1 pt-0.5 text-[17px] leading-6 text-[#111b21]">+971 56 938 1733</h1>
        <div className="flex items-center gap-7 text-[#54656f]">
          <button type="button" aria-label="Search">
            <Icon d={SEARCH} className="size-[27px]" />
          </button>
          <button type="button" aria-label="Menu" className="-mr-[3px]">
            <Icon d={DOTS} className="size-[27px]" />
          </button>
        </div>
      </header>

      <main className="relative flex min-h-0 flex-1 flex-col overflow-hidden border-t border-[#e6e6e6] bg-[#efeae2]">
        <Wallpaper />
        <div className="relative flex min-h-0 flex-1 flex-col justify-end gap-[14px] pr-[62px] pb-[22px] pl-[67px]">
          <div className="flex flex-col gap-[3px]">
            <Bubble out className="h-14 w-[231px] self-end" />
            <TextMessage out forwarded text="العمله : الجنية المصري" time="2:41 pm" />
          </div>

          <div className="flex flex-col gap-[3px]">
            <TextMessage tail text="تمام" time="2:42 pm" />
            <div className="flex items-center gap-[7px]">
              <Bubble className="w-[370px] pt-[7px] pr-[3px] pl-1">
                <Forwarded className="mb-2 pl-[5px]" />
                <ReceiptPreview />
                <DocumentRow name="transfer_2023_09_07_155728.pdf" details="1 page • PDF • 156 kB" />
                <div className="pt-2.5 pr-[5px] pb-[3px]">
                  <Stamp time="2:59 pm" />
                </div>
              </Bubble>
              <ForwardButton />
            </div>
          </div>

          <TextMessage out tail text="لحظات وسيتم التواصل من خدمة العملاء" time="2:59 pm" />
          <TextMessage tail text="تمام" time="2:59 pm" />

          <div className="flex items-center gap-[7px] self-end">
            <ForwardButton />
            <Bubble out tail className="w-[370px] p-[3px] pr-1">
              <div className="overflow-hidden rounded-t-lg">
                <InvoicePreview />
              </div>
              <DocumentRow out name="عبلة جعفر عوض المكي.pdf" details="1 page • PDF • 114 kB" />
              <div className="pt-2.5 pr-1">
                <Stamp out time="3:09 pm" />
              </div>
            </Bubble>
          </div>
        </div>
      </main>

      <footer className="flex h-[71px] shrink-0 items-center border-b-[3px] border-[#c9cdd1] pr-[13px] pl-6 text-[#54656f]">
        <button type="button" aria-label="Emoji">
          <Icon d={SMILEY} className="size-[29px]" />
        </button>
        <button type="button" aria-label="Attach" className="ml-[18px]">
          <Icon d={PLUS} className="size-[26px]" />
        </button>
        <div className="ml-[18px] flex h-[46px] flex-1 items-center rounded-lg bg-white pl-3.5">
          <span aria-hidden="true" className="mr-1 h-[22px] w-px bg-[#3b4a54]" />
          <input
            type="text"
            aria-label="Type a message"
            placeholder="Type a message"
            className="flex-1 bg-transparent pt-0.5 text-[16px] leading-6 text-[#3b4a54] outline-none placeholder:text-[#667781]"
          />
        </div>
        <button type="button" aria-label="Voice message" className="ml-[17px]">
          <Icon d={MIC} className="size-[27px]" />
        </button>
      </footer>
    </div>
  );
}
